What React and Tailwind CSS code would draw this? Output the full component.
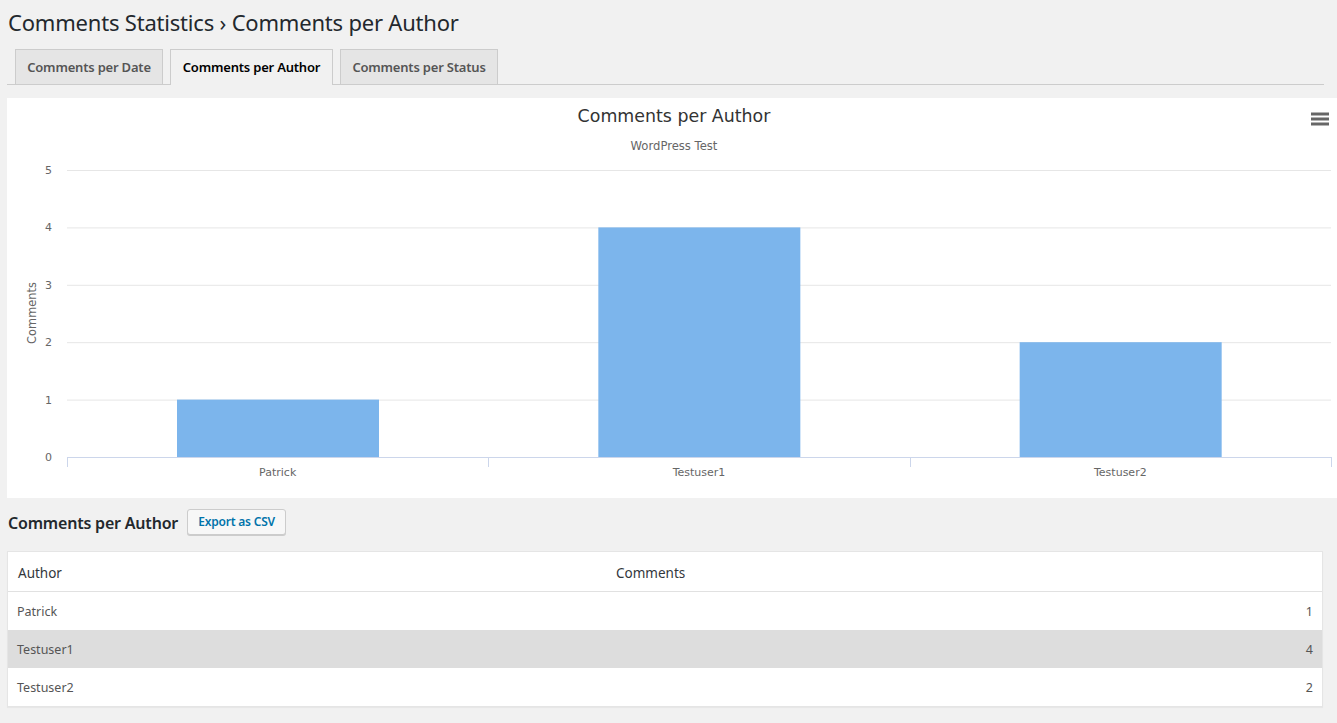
import React from 'react';

const authors = [
  { name: 'Patrick', count: 1 },
  { name: 'Testuser1', count: 4 },
  { name: 'Testuser2', count: 2 },
];

const tabs = [
  { label: 'Comments per Date', width: 'w-[148px] ml-[8px]' },
  { label: 'Comments per Author', width: 'w-[163px] ml-[7px]', active: true },
  { label: 'Comments per Status', width: 'w-[158px] ml-[7px]' },
];

// plot geometry, relative to the chart box
const PLOT_LEFT = 60;
const PLOT_RIGHT = 1324;
const PLOT_TOP = 72;
const PLOT_BOTTOM = 359;
const Y_MAX = 5;
const step = (PLOT_BOTTOM - PLOT_TOP) / Y_MAX;
const catWidth = (PLOT_RIGHT - PLOT_LEFT) / authors.length;

const AuthorChart = () => {
  const ticks = [0, 1, 2, 3, 4, 5];
  return (
    <svg width="1330" height="400" className="block" style={{ fontFamily: '"DejaVu Sans", Verdana, sans-serif' }}>
      <text x="667" y="24" textAnchor="middle" fontSize="17.4" fill="#333333">Comments per Author</text>
      <text x="667" y="52" textAnchor="middle" fontSize="11.6" fill="#666666">WordPress Test</text>

      {/* context menu button */}
      <g stroke="#666666" strokeWidth="3">
        <line x1="1304" y1="16" x2="1322" y2="16" />
        <line x1="1304" y1="21" x2="1322" y2="21" />
        <line x1="1304" y1="26" x2="1322" y2="26" />
      </g>

      {ticks.map((t) => {
        const y = PLOT_BOTTOM - t * step;
        return (
          <g key={t}>
            {t > 0 && <line x1={PLOT_LEFT} x2={PLOT_RIGHT} y1={y + 0.5} y2={y + 0.5} stroke="#e6e6e6" />}
            <text x="45" y={y + 4} textAnchor="end" fontSize="11" fill="#666666">{t}</text>
          </g>
        );
      })}

      <text transform="translate(29 215) rotate(-90)" textAnchor="middle" fontSize="11.4" fill="#666666">Comments</text>

      {authors.map((a, i) => {
        const h = a.count * step;
        return (
          <rect key={a.name} x={PLOT_LEFT + i * catWidth + 110} y={PLOT_BOTTOM - h} width="202" height={h} fill="#7cb5ec" />
        );
      })}

      <line x1={PLOT_LEFT} x2={PLOT_RIGHT} y1={PLOT_BOTTOM + 0.5} y2={PLOT_BOTTOM + 0.5} stroke="#ccd6eb" />
      {[0, 1, 2, 3].map((i) => {
        const x = Math.round(PLOT_LEFT + i * catWidth) + 0.5;
        return <line key={i} x1={x} x2={x} y1={PLOT_BOTTOM} y2={PLOT_BOTTOM + 10} stroke="#ccd6eb" />;
      })}

      {authors.map((a, i) => (
        <text key={a.name} x={PLOT_LEFT + i * catWidth + catWidth / 2} y="378" textAnchor="middle" fontSize="11" fill="#666666">
          {a.name}
        </text>
      ))}
    </svg>
  );
};

export default function App() {
  return (
    <div className="min-h-[723px] bg-[#f1f1f1] overflow-hidden text-[#444]" style={{ fontFamily: '"Noto Sans", "Open Sans", sans-serif' }}>
      <h1 className="pl-[8px] pt-[8px] text-[22px] leading-[29px] font-normal text-[#23282d] tracking-[-0.2px]">
        Comments Statistics › Comments per Author
      </h1>

      {/* tabs */}
      <div className="mt-[12px] ml-[7px] mr-[13px] h-[36px] flex items-end border-b border-[#cccccc]">
        {tabs.map((t) => (
          <div
            key={t.label}
            className={`${t.width} border border-b-0 border-[#cccccc] text-[13px] font-semibold leading-[24px] text-center tracking-[-0.2px] ${
              t.active ? 'h-[36px] -mb-px bg-[#f1f1f1] text-black' : 'h-[35px] bg-[#e5e5e5] text-[#555555]'
            } pt-[5px]`}
          >
            {t.label}
          </div>
        ))}
      </div>

      {/* chart */}
      <div className="mt-[13px] ml-[7px] bg-white h-[400px]">
        <AuthorChart />
      </div>

      {/* table heading */}
      <div className="mt-[11px] ml-[8px] flex items-center gap-[9px] h-[26px]">
        <h2 className="text-[16px] font-semibold text-[#23282d] tracking-[-0.2px] pt-[1px]">Comments per Author</h2>
        <button className="h-[26px] w-[99px] border border-[#cccccc] bg-[#f7f7f7] rounded-[3px] shadow-[0_1px_0_#cccccc] text-[12px] font-semibold text-[#0073aa] tracking-[-0.2px]">
          Export as CSV
        </button>
      </div>

      {/* table */}
      <div className="mt-[16px] ml-[7px] mr-[14px] bg-white border border-[#e5e5e5] shadow-[0_1px_1px_rgba(0,0,0,0.04)]">
        <div className="grid grid-cols-[598px_1fr] h-[40px] pt-[3px] items-center border-b border-[#e1e1e1] text-[13.5px] text-[#32373c]">
          <div className="pl-[10px]">Author</div>
          <div className="pl-[10px]">Comments</div>
        </div>
        {authors.map((a, i) => (
          <div
            key={a.name}
            className={`grid grid-cols-[598px_1fr] h-[38px] pt-[2px] items-center text-[12.5px] text-[#555555] ${i === 1 ? 'bg-[#dddddd]' : ''}`}
          >
            <div className="pl-[9px]">{a.name}</div>
            <div className="pr-[9px] text-right">{a.count}</div>
          </div>
        ))}
      </div>
    </div>
  );
}
